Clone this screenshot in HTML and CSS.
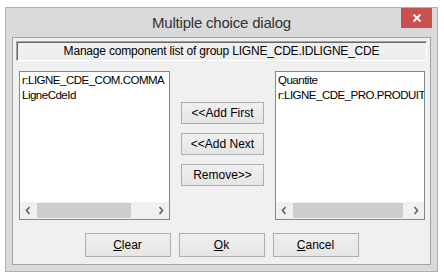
FILE: index.html
```html
<!DOCTYPE html>
<html lang="en">
<head>
    <meta charset="UTF-8">
    <title>Multiple choice dialog</title>
    <link rel="stylesheet" href="styles.css">
</head>
<body>
<div class="window">
    <div class="titlebar">
        <span class="title">Multiple choice dialog</span>
        <div class="close">
            <svg width="10" height="10" viewBox="0 0 10 10"><path d="M1.5 1.5 L8.5 8.5 M8.5 1.5 L1.5 8.5" stroke="#fff" stroke-width="1.8" fill="none"/></svg>
        </div>
    </div>
    <div class="client">
        <div class="caption">Manage component list of group LIGNE_CDE.IDLIGNE_CDE</div>
        <div class="lists">
            <div class="listbox">
                <ul class="items">
                    <li>r:LIGNE_CDE_COM.COMMA</li>
                    <li>LigneCdeId</li>
                </ul>
                <div class="hscroll">
                    <span class="arrow"><svg width="17" height="17" viewBox="0 0 17 17"><path d="M9.5 5 L6.5 8.5 L9.5 12" stroke="#606060" stroke-width="1.6" fill="none"/></svg></span>
                    <span class="thumb thumb-left"></span>
                    <span class="track"></span>
                    <span class="arrow"><svg width="17" height="17" viewBox="0 0 17 17"><path d="M7.5 5 L10.5 8.5 L7.5 12" stroke="#606060" stroke-width="1.6" fill="none"/></svg></span>
                </div>
            </div>
            <div class="moves">
                <button class="btn move-btn">&lt;&lt;Add First</button>
                <button class="btn move-btn">&lt;&lt;Add Next</button>
                <button class="btn move-btn">Remove&gt;&gt;</button>
            </div>
            <div class="listbox">
                <ul class="items">
                    <li>Quantite</li>
                    <li>r:LIGNE_CDE_PRO.PRODUIT</li>
                </ul>
                <div class="hscroll">
                    <span class="arrow"><svg width="17" height="17" viewBox="0 0 17 17"><path d="M9.5 5 L6.5 8.5 L9.5 12" stroke="#606060" stroke-width="1.6" fill="none"/></svg></span>
                    <span class="thumb thumb-right"></span>
                    <span class="track"></span>
                    <span class="arrow"><svg width="17" height="17" viewBox="0 0 17 17"><path d="M7.5 5 L10.5 8.5 L7.5 12" stroke="#606060" stroke-width="1.6" fill="none"/></svg></span>
                </div>
            </div>
        </div>
        <div class="actions">
            <button class="btn action-btn"><u>C</u>lear</button>
            <button class="btn action-btn"><u>O</u>k</button>
            <button class="btn action-btn"><u>C</u>ancel</button>
        </div>
    </div>
</div>
</body>
</html>
```

FILE: styles.css
```css
body {
    margin: 0;
    background: #ffffff;
    font-family: "Liberation Sans", Arial, sans-serif;
    font-size: 12px;
    color: #000;
}

.window {
    box-sizing: border-box;
    width: 433px;
    height: 265px;
    margin: 7px 0 0 5px;
    border: 1px solid #b0b0b0;
    background: #dadada;
    display: flex;
    flex-direction: column;
}

.titlebar {
    position: relative;
    height: 29px;
    flex: none;
    display: flex;
    align-items: center;
    justify-content: center;
}

.title {
    font-size: 15px;
    letter-spacing: -0.2px;
    color: #333333;
}

.close {
    position: absolute;
    top: 0;
    right: 5px;
    width: 31px;
    height: 20px;
    background: #c75050;
    display: flex;
    align-items: center;
    justify-content: center;
}

.client {
    flex: 1;
    margin: 0 6px 6px 6px;
    border: 1px solid #a3a3a3;
    background: #f0f0f0;
    padding: 3px;
    display: flex;
    flex-direction: column;
}

.caption {
    box-sizing: border-box;
    height: 20px;
    border: 1px solid;
    border-color: #a0a0a0 #ffffff #ffffff #a0a0a0;
    box-shadow: inset 1px 1px 0 #696969;
    background: #efefef;
    text-align: center;
    line-height: 18px;
    letter-spacing: -0.2px;
}

.lists {
    margin: 10px 2px 0 3px;
    height: 149px;
    display: grid;
    grid-template-columns: 151px 1fr 150px;
}

.listbox {
    box-sizing: border-box;
    border: 1px solid #828790;
    background: #ffffff;
    display: flex;
    flex-direction: column;
    overflow: hidden;
}

.items {
    flex: 1;
    list-style: none;
    margin: 0;
    padding: 1px 0 0 2px;
    font-size: 11.5px;
    letter-spacing: -0.5px;
    line-height: 15px;
    white-space: nowrap;
    overflow: hidden;
}

.hscroll {
    height: 17px;
    flex: none;
    background: #f0f0f0;
    display: flex;
}

.arrow {
    width: 17px;
    height: 17px;
    flex: none;
}

.arrow svg {
    display: block;
}

.thumb {
    height: 15px;
    margin-top: 1px;
    background: #cdcdcd;
    flex: none;
}

.thumb-left {
    width: 94px;
}

.thumb-right {
    width: 110px;
}

.track {
    flex: 1;
}

.moves {
    display: flex;
    flex-direction: column;
    align-items: center;
    justify-content: center;
    gap: 9px;
    padding-bottom: 3px;
}

.btn {
    box-sizing: border-box;
    border: 1px solid #adadad;
    background: linear-gradient(#f0f0f0, #e5e5e5);
    font-family: "Liberation Sans", Arial, sans-serif;
    font-size: 12px;
    color: #000;
    padding: 0;
}

.move-btn {
    width: 83px;
    height: 22px;
}

.actions {
    margin-top: 13px;
    display: flex;
    justify-content: center;
    gap: 8px;
}

.action-btn {
    width: 86px;
    height: 24px;
}
```
